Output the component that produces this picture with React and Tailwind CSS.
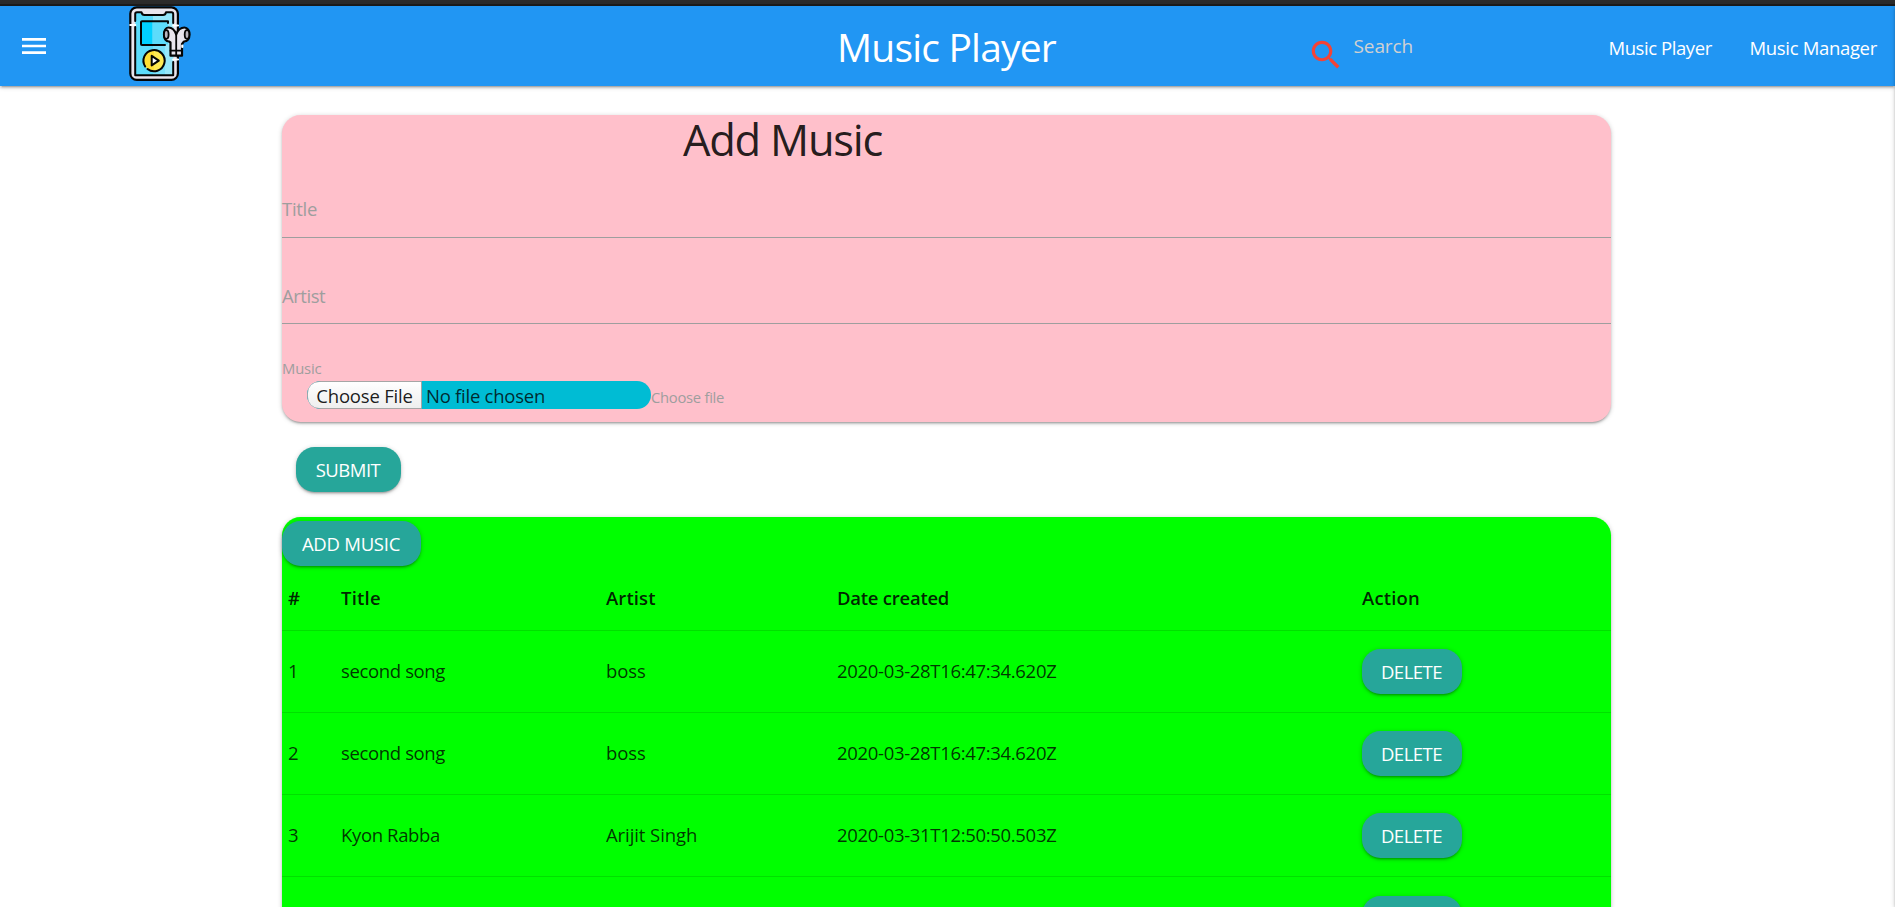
import React from 'react';

const CARD_SHADOW =
  'shadow-[0_2px_2px_0_rgba(0,0,0,0.14),0_3px_1px_-2px_rgba(0,0,0,0.12),0_1px_5px_0_rgba(0,0,0,0.2)]';

const songs = [
  { id: 1, title: 'second song', artist: 'boss', date: '2020-03-28T16:47:34.620Z' },
  { id: 2, title: 'second song', artist: 'boss', date: '2020-03-28T16:47:34.620Z' },
  { id: 3, title: 'Kyon Rabba', artist: 'Arijit Singh', date: '2020-03-31T12:50:50.503Z' },
];

const COLUMNS = 'grid grid-cols-[53px_265px_231px_525px_1fr] items-center pl-[6px]';

function Logo() {
  return (
    <svg className="h-[75px] w-[62px] shrink-0" viewBox="0 0 62 75" fill="none" strokeLinecap="round" strokeLinejoin="round">
      <rect x="1.3" y="1.3" width="47.6" height="72.6" rx="6.5" fill="#e9e5ed" stroke="#050505" strokeWidth="2.2" />
      <path d="M6.3 6.3H12L15 9.3H35.500L38.500 6.3H44.200V69.300H6.300Z" fill="#5cdcfb" />
      <path d="M24 9.3H35.500L38.500 6.3H44.200V69.300H24Z" fill="#97e7fa" />
      <path d="M24 40H36V69.300H24Z" fill="#5cdcfb" opacity=".5" />
      <path d="M12 16H23.500V38.500H12Z" fill="#00d0ff" />
      <path d="M23.500 16H39V38.500H23.500Z" fill="#5cdcfb" />
      <path d="M6.200 15V8Q6.200 6.300 8 6.300H12.500Q13 9 15.500 9H34Q36.500 9 37 6.300H42.500Q44.200 6.300 44.200 8V17M44.200 56V69.200H6.200V21" stroke="#050505" strokeWidth="2" />
      <path d="M36 39H13Q12 39 12 38V16Q12 15.200 13 15.200H39V17" stroke="#050505" strokeWidth="2" />
      <path d="M1.300 19H6.200M44.200 19.500H49M44.200 53.500H49" stroke="#fff" strokeWidth="2.200" />
      <circle cx="25" cy="54.600" r="10.600" fill="#ffdf36" />
      <path d="M25 44A10.600 10.600 0 0 1 25 65.200Z" fill="#fff066" opacity=".6" />
      <path d="M16.200 60.500A10.600 10.600 0 1 1 18.500 63" stroke="#050505" strokeWidth="2" />
      <path d="M22.700 49.800L29.800 54.600L22.700 59.400Z" fill="#fff" stroke="#050505" strokeWidth="2" />
      <path
        d="M47.200 28.500C45.500 23.500 42.500 21.500 39.500 21.500C36.500 21.500 35 25 35 28.500C35 32.500 37 35.500 40 35.500L41.500 36.500V49.700H53V38L55 35.500C58.500 35.500 60.500 32.500 60.500 28.500C60.500 25 58.500 21.500 55.500 21.500C52 21.500 49 23.500 47.200 28.500Z"
        fill="#e9e5ed"
        stroke="#050505"
        strokeWidth="2.200"
      />
      <path d="M47.200 28.500V49.500M41.500 44.700H53" stroke="#050505" strokeWidth="1.800" />
      <ellipse cx="37.300" cy="28.500" rx="2.300" ry="4.300" fill="#b9b4bd" stroke="#050505" strokeWidth="1.800" />
      <ellipse cx="58" cy="28.500" rx="2.300" ry="4.300" fill="#b9b4bd" stroke="#050505" strokeWidth="1.800" />
      <path d="M53.300 39.500V41" stroke="#fff" strokeWidth="2.200" />
    </svg>
  );
}

function Button({ className, children }) {
  return (
    <button
      className={`flex h-[45px] items-center justify-center rounded-[18.5px] bg-[#26a69a] pr-px whitespace-nowrap text-white ${CARD_SHADOW} ${className}`}
    >
      {children}
    </button>
  );
}

function Navbar() {
  return (
    <nav className={`flex h-20 items-center bg-[#2196f3] pl-[18px] text-white ${CARD_SHADOW}`}>
      <svg className="size-8 shrink-0" viewBox="0 0 24 24" fill="currentColor">
        <path d="M3 18h18v-2H3v2zm0-5h18v-2H3v2zm0-7v2h18V6H3z" />
      </svg>
      <div className="ml-[78.5px] flex h-20 items-start">
        <Logo />
      </div>
      <a className="ml-[646.5px] w-[237.5px] pt-[2px] text-[39px] leading-[60px] tracking-[-0.8px] whitespace-nowrap">Music Player</a>
      <svg className="mt-[30px] ml-[232.5px] size-[38px] shrink-0 self-start" viewBox="0 0 24 24" fill="#f44336">
        <path d="M15.5 14h-.79l-.28-.27C15.410 12.590 16 11.110 16 9.500 16 5.910 13.090 3 9.500 3S3 5.910 3 9.500 5.910 16 9.500 16c1.610 0 3.090-.59 4.230-1.570l.27.28v.79l5 4.990L20.490 19l-4.990-5zm-6 0C7.010 14 5 11.990 5 9.500S7.010 5 9.500 5 14 7.010 14 9.500 11.990 14 9.500 14z" />
      </svg>
      <span className="ml-[8.5px] w-[255px] text-[19px] leading-7 tracking-[-0.1px] text-[#d1d1d1]">Search</span>
      <a className="w-[141px] shrink-0 pt-[3px] tracking-[-0.43px] whitespace-nowrap">Music Player</a>
      <a className="shrink-0 pt-[3px] tracking-[-0.33px] whitespace-nowrap">Music Manager</a>
    </nav>
  );
}

function AddMusicForm() {
  return (
    <form>
      <div className={`h-[307px] rounded-[18.5px] bg-[#ffc0cb] text-[#9e9e9e] ${CARD_SHADOW}`}>
        <h3 className="h-12 pt-px pl-[401px] text-[43.5px] leading-[48px] tracking-[-1.25px] text-black/87">Add Music</h3>
        <div className="flex h-[75px] items-end border-b border-[#9e9e9e] pb-[15px] leading-[27px] tracking-[-0.3px]">Title</div>
        <div className="flex h-[86px] items-end border-b border-[#9e9e9e] pb-[14px] leading-[27px] tracking-[-0.45px]">Artist</div>
        <div className="mt-[33px] h-6 text-[14.8px] leading-[22px] tracking-[-0.15px]">Music</div>
        <div className="flex h-7 items-center pl-[25px]">
          <div className="flex h-7 w-[344px] items-center overflow-hidden rounded-[14px] bg-[#00bcd4] text-black/80">
            <div className="flex h-7 w-[115px] items-center justify-center rounded-l-[12px] border border-[#a6a6a6] bg-linear-to-b from-white to-[#eeeeee] tracking-[-0.2px] text-black/90">
              Choose File
            </div>
            <div className="pl-1 tracking-[-0.25px]">No file chosen</div>
          </div>
          <span className="pt-[3px] text-[14.8px] leading-[22px] tracking-[-0.28px]">Choose file</span>
        </div>
      </div>
      <Button className="mt-[25px] ml-[14px] w-[105px] tracking-[-0.5px]">SUBMIT</Button>
    </form>
  );
}

function MusicTable() {
  return (
    <section className={`mt-[25px] rounded-[18.5px] bg-[#00ff00] pt-1 text-black/87 ${CARD_SHADOW}`}>
      <Button className="w-[139px] tracking-[-0.25px]">ADD MUSIC</Button>
      <div className={`h-[65px] border-b border-black/12 pb-px font-semibold ${COLUMNS}`}>
        <span>#</span>
        <span className="tracking-[0.2px]">Title</span>
        <span className="tracking-[0.1px]">Artist</span>
        <span className="tracking-[-0.25px]">Date created</span>
        <span className="tracking-[0.15px]">Action</span>
      </div>
      {songs.map((song) => (
        <div key={song.id} className={`h-[82px] border-b border-black/12 text-black/80 ${COLUMNS}`}>
          <span className="pb-[2px]">{song.id}</span>
          <span className="pb-[2px] tracking-[-0.36px]">{song.title}</span>
          <span className="pb-[2px] tracking-[-0.08px]">{song.artist}</span>
          <span className="pb-[2px] tracking-[-0.32px]">{song.date}</span>
          <Button className="w-[100px] tracking-[-0.5px]">DELETE</Button>
        </div>
      ))}
      <div className={`h-[82px] ${COLUMNS}`}>
        <Button className="col-start-5 w-[100px]" />
      </div>
    </section>
  );
}

export default function App() {
  return (
    <div className="relative h-[907px] overflow-hidden bg-white font-['Open_Sans','Noto_Sans',sans-serif] text-[18.5px] leading-[27px]">
      <div className="h-[6px] border-b-2 border-[#1c1c1c] bg-[#2b2b2b]" />
      <Navbar />
      <main className="mt-[29px] ml-[282px] w-[1329px]">
        <AddMusicForm />
        <MusicTable />
      </main>
      <div className={`absolute top-[6px] bottom-0 left-full w-80 ${CARD_SHADOW}`} />
    </div>
  );
}
